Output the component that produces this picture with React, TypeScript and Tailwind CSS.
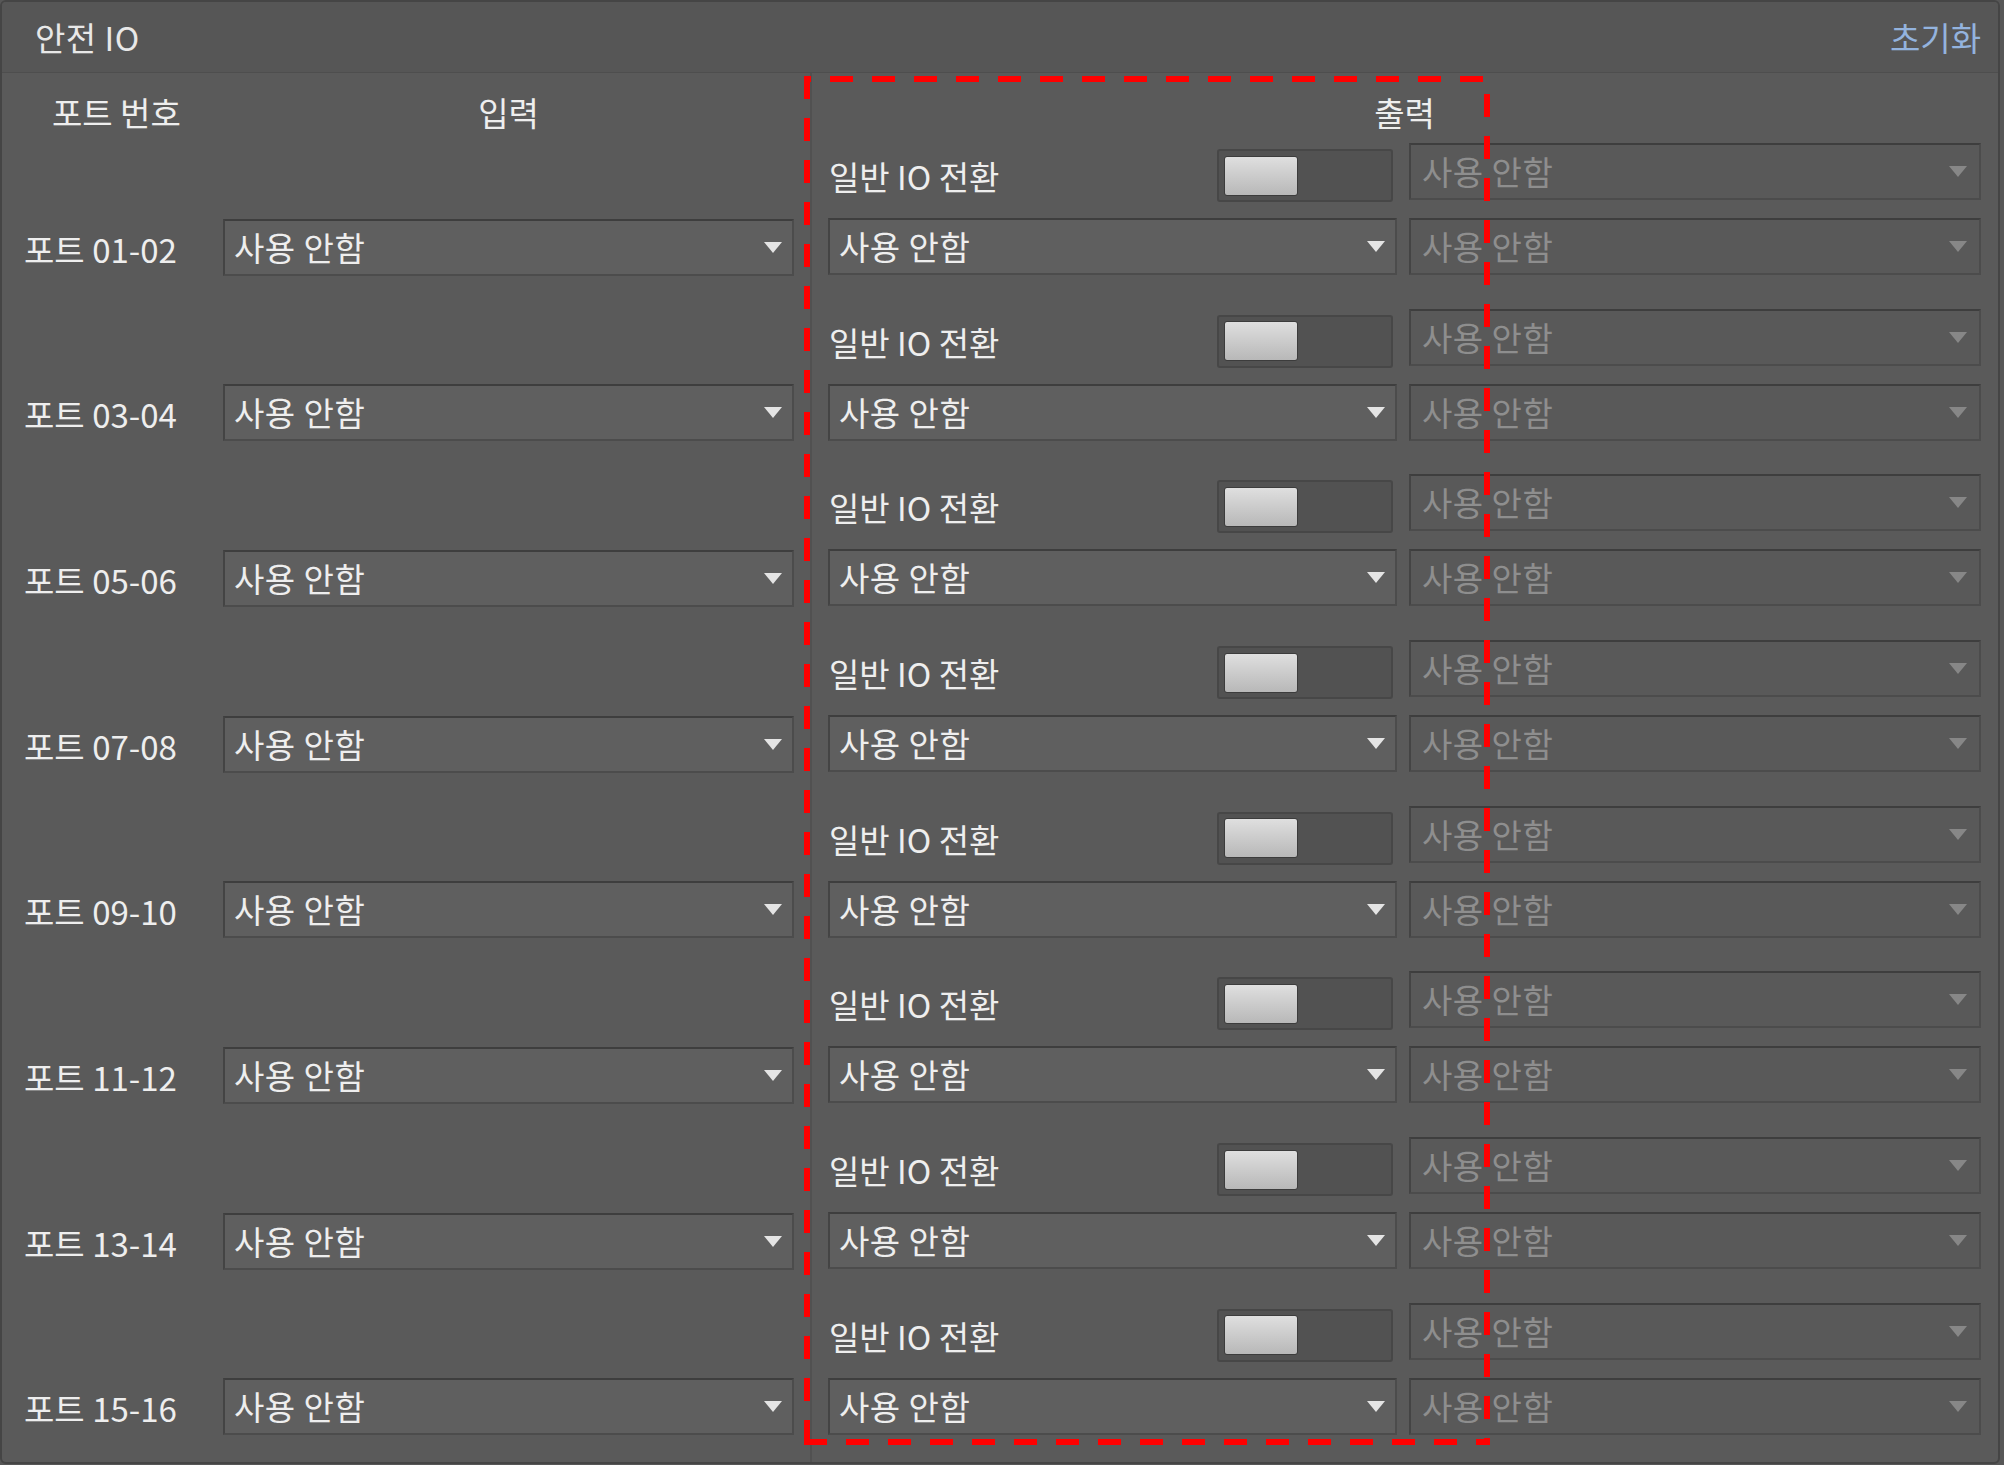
import React from 'react'

const ports = ['01-02', '03-04', '05-06', '07-08', '09-10', '11-12', '13-14', '15-16']

const Arrow = ({ disabled }: { disabled?: boolean }) => (
  <svg width="18" height="11" viewBox="0 0 18 11" className="shrink-0">
    <polygon points="0,0 18,0 9,11" fill={disabled ? '#878787' : '#e4e4e4'} />
  </svg>
)

const Select = ({ className, disabled }: { className: string; disabled?: boolean }) => (
  <div
    className={`flex items-center justify-between h-[57px] border-2 border-[#4c4c4c] border-t-[#3e3e3e] border-l-[#444444] ${
      disabled ? 'bg-[#595959] text-[#8e8e8e] pl-[11px] pr-[12px]' : 'bg-[#5f5f5f] text-[#eeeeee] pl-[9px] pr-[10px]'
    } ${className}`}
  >
    <span className="leading-none tracking-[0.5px]">사용 안함</span>
    <Arrow disabled={disabled} />
  </div>
)

const Toggle = () => (
  <div className="flex items-center w-[176px] h-[53px] rounded-[3px] border-2 border-[#474747] bg-[#525252] px-[5px]">
    <div className="w-[74px] h-[40px] rounded-[3px] border border-[#3c3c3c] bg-linear-to-b from-[#dfdfdf] to-[#b8b8b8]" />
  </div>
)

export default function App() {
  return (
    <div
      className="relative w-[2004px] h-[1465px] bg-[#575757] text-[33px] text-[#eeeeee]"
      style={{ fontFamily: '"Noto Sans CJK KR", "Noto Sans", sans-serif' }}
    >
      <div className="w-[2000px] h-[1464px] border-2 border-[#454545] rounded-[6px] bg-[#5a5a5a] flex flex-col overflow-hidden">
        {/* Header */}
        <div className="h-[71px] shrink-0 flex items-center justify-between pl-[33px] pr-[17px] bg-[#565656] border-b border-[#4e4e4e]">
          <span className="leading-none text-[#e8e8e8] tracking-[0.5px]">안전 IO</span>
          <span className="leading-none text-[#93b3de]">초기화</span>
        </div>

        {/* Body */}
        <div className="flex flex-1">
          {/* Port + input */}
          <div className="w-[792px] flex flex-col">
            <div className="h-[70px] flex items-center pt-[8px]">
              <span className="w-[221px] pl-[50px] leading-none">포트 번호</span>
              <span className="w-[571px] text-center leading-none">입력</span>
            </div>
            <div className="flex flex-col gap-[32.7px]">
              {ports.map((p) => (
                <div key={p} className="h-[133px] pt-[75px]">
                  <div className="flex items-center h-[58px]">
                    <span className="w-[221px] pl-[22px] pt-[4px] leading-none">포트 {p}</span>
                    <Select className="w-[571px]" />
                  </div>
                </div>
              ))}
            </div>
          </div>

          {/* Divider */}
          <div className="w-[34px] flex justify-center">
            <div className="w-[2px] bg-[#515151]" />
          </div>

          {/* Output */}
          <div className="w-[1153px] flex flex-col">
            <div className="h-[70px] flex items-center justify-center pt-[8px]">
              <span className="leading-none">출력</span>
            </div>
            <div className="flex flex-col gap-[32.7px]">
              {ports.map((p) => (
                <div key={p} className="h-[133px] flex flex-col">
                  <div className="flex h-[59px]">
                    <div className="w-[569px] flex items-center justify-between pt-[6px] pr-[4px] pl-[1px]">
                      <span className="leading-none pt-[2px]">일반 IO 전환</span>
                      <Toggle />
                    </div>
                    <Select className="w-[572px] ml-[12px]" disabled />
                  </div>
                  <div className="flex mt-[16px]">
                    <Select className="w-[569px]" />
                    <Select className="w-[572px] ml-[12px]" disabled />
                  </div>
                </div>
              ))}
            </div>
          </div>
        </div>
      </div>

      {/* Red dashed highlight */}
      <svg className="absolute left-[804px] top-[76px]" width="686" height="1369" viewBox="0 0 686 1369">
        <g stroke="#ff0000" strokeWidth="6" fill="none" strokeDasharray="23 19">
          <line x1="3" y1="0" x2="3" y2="1369" />
          <line x1="0" y1="3" x2="686" y2="3" strokeDashoffset="16" />
          <line x1="683" y1="0" x2="683" y2="1369" strokeDashoffset="24" />
          <line x1="0" y1="1366" x2="686" y2="1366" />
        </g>
      </svg>
    </div>
  )
}
